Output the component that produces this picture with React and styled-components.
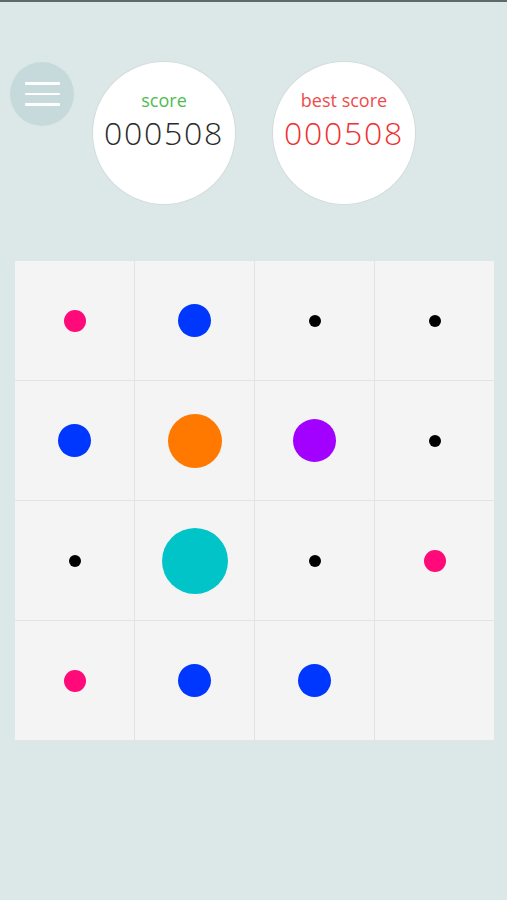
import React from "react";
import styled, { createGlobalStyle } from "styled-components";

const Global = createGlobalStyle`
  html, body { margin: 0; padding: 0; }
  body { background: #dce8e7; font-family: "Open Sans", "Noto Sans", sans-serif; }
`;

const Page = styled.div`
  width: 507px;
  height: 900px;
  background: #dce8e7;
  border-top: 2px solid #5e6a6a;
  box-sizing: border-box;
  display: flex;
  flex-direction: column;
`;

const Header = styled.div`
  display: flex;
  align-items: flex-start;
  padding: 60px 0 0 10px;
`;

const MenuButton = styled.div`
  width: 64px;
  height: 64px;
  border-radius: 50%;
  background: #c6d9db;
  display: flex;
  flex-direction: column;
  justify-content: center;
  align-items: center;
  gap: 8px;
`;

const MenuLine = styled.span`
  display: block;
  width: 35px;
  height: 2.5px;
  background: #ffffff;
  border-radius: 1px;
`;

const ScoreCircle = styled.div`
  width: 142px;
  height: 142px;
  border-radius: 50%;
  background: #ffffff;
  box-shadow: 0 0 0 1px #d2dcdb;
  margin-left: ${(p) => p.$gap}px;
  display: flex;
  flex-direction: column;
  align-items: center;
  box-sizing: border-box;
  padding-top: 27px;
`;

const Label = styled.div`
  font-size: 18px;
  line-height: 22px;
  color: ${(p) => p.$color};
  font-weight: 400;
`;

const Value = styled.div`
  font-size: 32px;
  line-height: 36px;
  font-weight: 300;
  letter-spacing: 1.7px;
  color: ${(p) => p.$color};
  margin-top: 4px;
`;

const Board = styled.div`
  margin: 57px 0 0 15px;
  width: 479px;
  display: grid;
  grid-template-columns: repeat(4, 119px);
  grid-template-rows: repeat(4, 119px);
  gap: 1px;
  background: #e2e4e4;
`;

const Cell = styled.div`
  background: #f4f4f4;
  display: flex;
  align-items: center;
  justify-content: center;
`;

const Dot = styled.div`
  width: ${(p) => p.$size}px;
  height: ${(p) => p.$size}px;
  border-radius: 50%;
  background: ${(p) => p.$color};
`;

const DOTS = {
  k: { size: 12, color: "#000000" },
  p: { size: 22, color: "#ff0a78" },
  b: { size: 33, color: "#0037ff" },
  v: { size: 43, color: "#a200ff" },
  o: { size: 54, color: "#ff7800" },
  t: { size: 66, color: "#00c4c8" },
};

const board = [
  ["p", "b", "k", "k"],
  ["b", "o", "v", "k"],
  ["k", "t", "k", "p"],
  ["p", "b", "b", null],
];

export default function App() {
  return (
    <>
      <Global />
      <Page>
        <Header>
          <MenuButton>
            <MenuLine />
            <MenuLine />
            <MenuLine />
          </MenuButton>
          <ScoreCircle $gap={19}>
            <Label $color="#4fbb4f">score</Label>
            <Value $color="#2a2a2a">000508</Value>
          </ScoreCircle>
          <ScoreCircle $gap={38}>
            <Label $color="#ee4b4b">best score</Label>
            <Value $color="#f03030">000508</Value>
          </ScoreCircle>
        </Header>
        <Board>
          {board.flat().map((d, i) => (
            <Cell key={i}>
              {d && <Dot $size={DOTS[d].size} $color={DOTS[d].color} />}
            </Cell>
          ))}
        </Board>
      </Page>
    </>
  );
}
